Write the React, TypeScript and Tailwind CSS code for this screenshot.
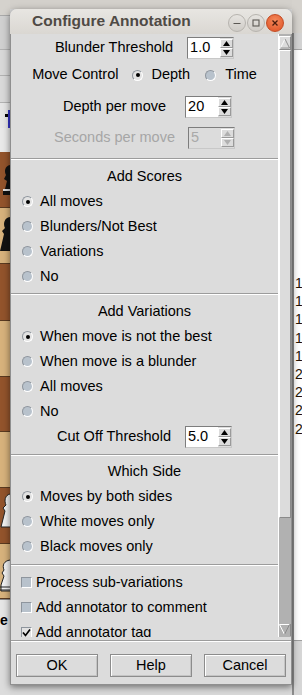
import React from "react";

function Radio({ checked }: { checked?: boolean }) {
  return (
    <span
      className={`flex h-[11px] w-[11px] shrink-0 items-center justify-center rounded-full border border-t-[#8e959d] border-l-[#8e959d] border-b-white border-r-white ${
        checked ? "bg-[#e2e2e2]" : "bg-[#b8c2cc]"
      }`}
    >
      {checked && <span className="h-[4px] w-[4px] rounded-full bg-black" />}
    </span>
  );
}

function Check({ checked }: { checked?: boolean }) {
  return (
    <span
      className={`flex h-[11px] w-[11px] shrink-0 items-center justify-center border border-t-[#8e959d] border-l-[#8e959d] border-b-white border-r-white ${
        checked ? "bg-[#e2e2e2]" : "bg-[#b8c2cc]"
      }`}
    >
      {checked && (
        <svg width="9" height="9" viewBox="0 0 9 9">
          <path d="M1 4.5 L3.5 7.5 L8 1.5" stroke="#000" strokeWidth="1.7" fill="none" />
        </svg>
      )}
    </span>
  );
}

function Spin({ value, disabled }: { value: string; disabled?: boolean }) {
  const c = disabled ? "#b0b0b0" : "#000";
  return (
    <div
      className={`flex h-[22px] w-[47px] shrink-0 border border-t-[#7d7d7d] border-l-[#7d7d7d] border-b-[#c8c8c8] border-r-[#c8c8c8] ${
        disabled ? "bg-[#dcdcdc]" : "bg-white"
      }`}
    >
      <div className={`flex flex-1 items-center pl-[2px] ${disabled ? "text-[#a9a9a9]" : "text-black"}`}>{value}</div>
      <div className="flex w-[13px] flex-col bg-[#dcdcdc] py-[1px]">
        <div className="flex flex-1 items-center justify-center border border-t-white border-l-white border-b-[#9a9a9a] border-r-[#9a9a9a]">
          <svg width="7" height="5" viewBox="0 0 7 5">
            <path d="M3.5 0 L7 5 L0 5Z" fill={c} />
          </svg>
        </div>
        <div className="flex flex-1 items-center justify-center border border-t-white border-l-white border-b-[#9a9a9a] border-r-[#9a9a9a]">
          <svg width="7" height="5" viewBox="0 0 7 5">
            <path d="M0 0 L7 0 L3.5 5Z" fill={c} />
          </svg>
        </div>
      </div>
    </div>
  );
}

function RadioRow({ label, checked }: { label: string; checked?: boolean }) {
  return (
    <div className="flex h-[25px] items-center pl-[11px]">
      <Radio checked={checked} />
      <span className="ml-[7px]">{label}</span>
    </div>
  );
}

function CheckRow({ label, checked }: { label: string; checked?: boolean }) {
  return (
    <div className="flex h-[25px] shrink-0 items-center pl-[10px]">
      <Check checked={checked} />
      <span className="ml-[4px]">{label}</span>
    </div>
  );
}

function Title({ children }: { children: React.ReactNode }) {
  return <div className="flex h-[25px] items-center justify-center">{children}</div>;
}

function Sep() {
  return <div className="h-[2px] shrink-0 border-t border-b border-t-[#9c9c9c] border-b-white" />;
}

function Square({ dark, h, piece }: { dark: boolean; h: string; piece?: "b1" | "b2" | "w1" | "w2" }) {
  return (
    <div className={`relative shrink-0 border-b border-[#5a3a20] ${h} ${dark ? "bg-[#93542c]" : "bg-[#d7b27c]"}`}>
      {piece === "b1" && (
        <svg className="absolute left-[3px] top-[13px]" width="7" height="30" viewBox="0 0 7 30">
          <path d="M7 0 C2 1 1 6 3 10 L1 14 L4 16 L2 24 L0 26 L0 30 L7 30Z" fill="#111" />
          <rect x="0" y="24" width="7" height="2" fill="#ddd" />
        </svg>
      )}
      {piece === "b2" && (
        <svg className="absolute left-0 top-[9px]" width="10" height="40" viewBox="0 0 10 40">
          <path d="M10 0 C4 1 3 7 5 11 L2 14 L4 17 L1 30 L0 34 L10 34Z" fill="#111" />
        </svg>
      )}
      {piece === "w1" && (
        <svg className="absolute left-0 top-[5px]" width="10" height="40" viewBox="0 0 10 40">
          <path d="M10 1 C5 2 4 8 6 12 L3 15 L5 18 L2 30 L1 34 L10 34" stroke="#222" strokeWidth="1" fill="#f2f2f2" />
        </svg>
      )}
      {piece === "w2" && (
        <svg className="absolute left-0 top-[15px]" width="10" height="40" viewBox="0 0 10 40">
          <path d="M10 1 C4 2 2 6 4 11 L2 14 L4 17 L1 26 L1 32 L10 32" stroke="#222" strokeWidth="1" fill="#f2f2f2" />
          <path d="M0 28 L10 28 M0 31 L10 31" stroke="#222" strokeWidth="1" />
        </svg>
      )}
    </div>
  );
}

function LeftStrip() {
  return (
    <div className="flex w-[10px] shrink-0 flex-col overflow-hidden">
      <div className="h-[15px] shrink-0 bg-[#d5d2cd]" />
      <div className="h-[1px] shrink-0 bg-[#a9a9a9]" />
      <div className="h-[33px] shrink-0 bg-[#d0d0d0]" />
      <div className="h-[1px] shrink-0 bg-[#b2b2b2]" />
      <div className="h-[25px] shrink-0 bg-[#d8d8d8]" />
      <div className="h-[1px] shrink-0 bg-[#b2b2b2]" />
      <div className="h-[26px] shrink-0 bg-[#d9d9d9]" />
      <div className="h-[1px] shrink-0 bg-[#b2b2b2]" />
      <div className="h-[7px] shrink-0 bg-[#e6e6e6]" />
      <div className="flex h-[18px] shrink-0 justify-end bg-[#e6e6e6]">
        <div className="mt-[4px] h-[3px] w-[3px] bg-black" />
        <div className="w-[2px] bg-[#3535c8]" />
      </div>
      <div className="h-[24px] shrink-0 bg-[#e9e9e9]" />
      <Square dark h="h-[56px]" piece="b1" />
      <Square dark={false} h="h-[56px]" piece="b2" />
      <Square dark h="h-[57px]" />
      <Square dark={false} h="h-[56px]" />
      <Square dark h="h-[55px]" />
      <Square dark={false} h="h-[56px]" />
      <Square dark h="h-[56px]" piece="w1" />
      <Square dark={false} h="h-[55px]" piece="w2" />
      <div className="h-[1px] shrink-0 bg-[#8a8a8a]" />
      <div className="h-[10px] shrink-0 bg-[#e6e6e6]" />
      <div className="flex h-[20px] shrink-0 items-center bg-[#e6e6e6] text-[14px] font-bold leading-none text-black">e</div>
      <div className="flex-1 bg-[#dcdcdc]" />
    </div>
  );
}

function RightStrip() {
  const digits = ["1", "1", "1", "1", "1", "2", "2", "2", "2"];
  return (
    <div className="flex w-[10px] shrink-0 flex-col overflow-hidden">
      <div className="h-[33px] shrink-0 bg-[#d5d2cd]" />
      <div className="flex flex-1">
        <div className="w-[4px] border-x border-[#8c8c8c] bg-[#c2c2c2]" />
        <div className="flex flex-1 flex-col">
          <div className="h-[17px] shrink-0 border-b border-[#a6a6a6] bg-[#d3d3d3]" />
          <div className="h-[590px] shrink-0 overflow-hidden bg-white pl-[1px] pt-[224px] text-[14px] leading-[18.2px] text-[#241204]">
            {digits.map((d, i) => (
              <div key={i}>{d}</div>
            ))}
          </div>
          <div className="flex-1 border-t border-[#a0a0a0] bg-[#d6d6d6]" />
        </div>
      </div>
    </div>
  );
}

function UpArrow() {
  return (
    <svg width="11" height="11" viewBox="0 0 11 11">
      <path d="M0.5 10.5 L5.5 0.5" stroke="#ffffff" strokeWidth="1" />
      <path d="M5.5 0.5 L10.5 10.5 L0.5 10.5" stroke="#8a8a8a" strokeWidth="1" fill="none" />
    </svg>
  );
}

function DownArrow() {
  return (
    <svg width="11" height="11" viewBox="0 0 11 11">
      <path d="M0.5 0.5 L10.5 0.5 M0.5 0.5 L5.5 10.5" stroke="#ffffff" strokeWidth="1" fill="none" />
      <path d="M5.5 10.5 L10.5 0.5" stroke="#8a8a8a" strokeWidth="1" />
    </svg>
  );
}

function Scrollbar() {
  return (
    <div className="flex w-[13px] shrink-0 flex-col border-l border-white bg-[#b1b1b1] pt-[2px] pb-[1px]">
      <div className="flex h-[14px] shrink-0 items-start justify-center border border-t-white border-l-white border-b-[#8a8a8a] border-r-[#8a8a8a] bg-[#dcdcdc] pt-[1px]">
        <UpArrow />
      </div>
      <div className="h-[468px] shrink-0 border border-t-white border-l-white border-b-[#8a8a8a] border-r-[#8a8a8a] bg-[#dcdcdc]" />
      <div className="flex-1" />
      <div className="flex h-[12px] shrink-0 items-start justify-center border-r border-[#8a8a8a]">
        <DownArrow />
      </div>
    </div>
  );
}

function Btn({ label }: { label: string }) {
  return (
    <div className="flex h-[23px] w-[82px] items-center justify-center border border-[#8c8c8c] bg-[#dcdcdc] shadow-[inset_1px_1px_0_#ffffff,inset_-1px_-1px_0_#c4c4c4]">
      {label}
    </div>
  );
}

export default function App() {
  return (
    <div className="relative flex h-[695px] w-[302px] overflow-hidden bg-[#d3d0cb] font-['Liberation_Sans',Arial,sans-serif] text-[14.5px] text-black">
      <LeftStrip />
      <div className="flex flex-1 flex-col">
        <div className="h-[9px] bg-[#d3d0cb]" />
        <div className="flex-1 bg-[#d9d9d9]" />
      </div>
      <RightStrip />

      {/* dialog window */}
      <div className="absolute left-[10px] top-[9px] flex h-[676px] w-[282px] flex-col overflow-hidden rounded-t-[7px] shadow-[0_2px_7px_rgba(0,0,0,0.5)]">
        {/* title bar */}
        <div className="flex h-[25px] shrink-0 items-center bg-linear-to-b from-[#e8e6e2] to-[#dad7d2] pl-[22px] pr-[8px]">
          <span className="pb-[1px] text-[15.5px] font-bold text-[#4f4a45]">Configure Annotation</span>
          <div className="ml-auto flex gap-[1px] pt-[2px]">
            <div className="flex h-[18px] w-[18px] items-center justify-center rounded-full border border-[#b6b3ae] bg-linear-to-b from-[#e6e4e0] to-[#cfccc7]">
              <svg width="8" height="8" viewBox="0 0 8 8">
                <path d="M0.5 4.5 L7.5 4.5" stroke="#5b5853" strokeWidth="1.2" />
              </svg>
            </div>
            <div className="flex h-[18px] w-[18px] items-center justify-center rounded-full border border-[#b6b3ae] bg-linear-to-b from-[#e6e4e0] to-[#cfccc7]">
              <svg width="8" height="8" viewBox="0 0 8 8">
                <rect x="1" y="1" width="6" height="6" stroke="#5b5853" strokeWidth="1.1" fill="none" />
              </svg>
            </div>
            <div className="flex h-[18px] w-[18px] items-center justify-center rounded-full border border-[#c24a22] bg-[radial-gradient(circle_at_50%_35%,#f58a5c,#de5023)]">
              <svg width="8" height="8" viewBox="0 0 8 8">
                <path d="M1.5 1.5 L6.5 6.5 M6.5 1.5 L1.5 6.5" stroke="#4a1c0c" strokeWidth="1.3" />
              </svg>
            </div>
          </div>
        </div>

        {/* body */}
        <div className="flex flex-1 flex-col border-x border-b border-[#8f8f8f] bg-[#dcdcdc]">
          <div className="flex h-[603px] shrink-0">
            <div className="flex w-[267px] flex-col overflow-hidden">
              {/* section 1 */}
              <div className="flex h-[124px] shrink-0 flex-col pt-[3px]">
                <div className="flex h-[22px] items-center justify-center gap-[14px]">
                  <span>Blunder Threshold</span>
                  <Spin value="1.0" />
                </div>
                <div className="mt-[5px] flex h-[22px] items-center justify-center">
                  <span>Move Control</span>
                  <span className="ml-[14px]">
                    <Radio checked />
                  </span>
                  <span className="ml-[8px]">Depth</span>
                  <span className="ml-[15px]">
                    <Radio />
                  </span>
                  <span className="ml-[9px]">Time</span>
                </div>
                <div className="mt-[10px] flex h-[22px] items-center justify-center gap-[19px] pl-[6px]">
                  <span>Depth per move</span>
                  <Spin value="20" />
                </div>
                <div className="mt-[9px] flex h-[22px] items-center justify-center gap-[13px] text-[#a6a6a6]">
                  <span>Seconds per move</span>
                  <Spin value="5" disabled />
                </div>
              </div>
              <Sep />
              {/* section 2 */}
              <div className="flex h-[133px] shrink-0 flex-col pt-[4px]">
                <Title>Add Scores</Title>
                <RadioRow label="All moves" checked />
                <RadioRow label="Blunders/Not Best" />
                <RadioRow label="Variations" />
                <RadioRow label="No" />
              </div>
              <Sep />
              {/* section 3 */}
              <div className="flex h-[159px] shrink-0 flex-col pt-[4px]">
                <Title>Add Variations</Title>
                <RadioRow label="When move is not the best" checked />
                <RadioRow label="When move is a blunder" />
                <RadioRow label="All moves" />
                <RadioRow label="No" />
                <div className="flex h-[25px] items-center justify-center gap-[14px]">
                  <span>Cut Off Threshold</span>
                  <Spin value="5.0" />
                </div>
              </div>
              <Sep />
              {/* section 4 */}
              <div className="flex h-[108px] shrink-0 flex-col pt-[3px]">
                <Title>Which Side</Title>
                <RadioRow label="Moves by both sides" checked />
                <RadioRow label="White moves only" />
                <RadioRow label="Black moves only" />
              </div>
              <Sep />
              {/* section 5 */}
              <div className="flex shrink-0 flex-col pt-[4px]">
                <CheckRow label="Process sub-variations" />
                <CheckRow label="Add annotator to comment" />
                <CheckRow label="Add annotator tag" checked />
              </div>
            </div>
            <Scrollbar />
          </div>
          <div className="h-[3px] shrink-0" />
          <Sep />
          <div className="flex flex-1 justify-center gap-[12px] pt-[12px]">
            <Btn label="OK" />
            <Btn label="Help" />
            <Btn label="Cancel" />
          </div>
        </div>
      </div>
    </div>
  );
}
